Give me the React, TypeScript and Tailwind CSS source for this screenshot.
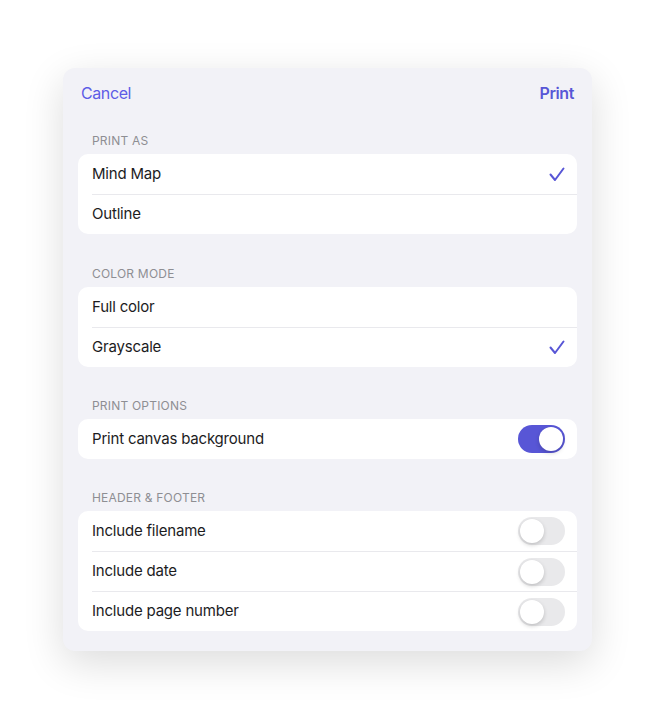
import { useState } from 'react';

type Row = { label: string; checked?: boolean };

function Check() {
  return (
    <svg width="16" height="15" viewBox="0 0 16 15" fill="none">
      <path
        d="M1.5 7.5 L6 13 L14.5 1.5"
        stroke="#5856d6"
        strokeWidth="2"
        strokeLinecap="round"
        strokeLinejoin="round"
      />
    </svg>
  );
}

function Toggle({ on }: { on: boolean }) {
  return (
    <div
      className={
        on
          ? 'flex h-[28px] w-[47px] items-center justify-end rounded-full bg-[#5856d6] p-[2px]'
          : 'flex h-[28px] w-[47px] items-center justify-start rounded-full bg-[#e9e9eb] p-[2px]'
      }
    >
      <div className="h-[24px] w-[24px] rounded-full bg-white shadow-[0_2px_4px_rgba(0,0,0,0.18)]" />
    </div>
  );
}

function Label({ children }: { children: string }) {
  return (
    <div className="mb-[5px] px-[14px] text-[12px] leading-4 tracking-[0.2px] text-[#8e8e93] uppercase">
      {children}
    </div>
  );
}

function Group({ children }: { children: React.ReactNode }) {
  return <div className="overflow-hidden rounded-[10px] bg-white">{children}</div>;
}

function RowLine({
  first,
  children,
  right,
}: {
  first?: boolean;
  children: string;
  right?: React.ReactNode;
}) {
  return (
    <div className="pl-[14px]">
      <div
        className={
          first
            ? 'flex h-[40px] items-center justify-between pr-[12px]'
            : 'flex h-[40px] items-center justify-between border-t border-[#e9e9ed] pr-[12px]'
        }
      >
        <span className="text-[15px] tracking-[-0.2px] text-[#1c1c1e]">{children}</span>
        {right}
      </div>
    </div>
  );
}

export default function App() {
  const [printAs] = useState<Row[]>([
    { label: 'Mind Map', checked: true },
    { label: 'Outline' },
  ]);
  const [colorMode] = useState<Row[]>([
    { label: 'Full color' },
    { label: 'Grayscale', checked: true },
  ]);
  const headerFooter = ['Include filename', 'Include date', 'Include page number'];

  return (
    <div
      className="flex h-[720px] w-full items-start justify-center bg-white pt-[68px]"
      style={{ fontFamily: 'Inter, "Noto Sans", sans-serif' }}
    >
      <div className="w-[529px] rounded-[12px] bg-[#f2f2f7] px-[15px] pb-[20px] shadow-[0_12px_40px_rgba(0,0,0,0.14)]">
        <div className="flex items-center justify-between px-[3px] pt-[14px] text-[16px] leading-[22px] tracking-[-0.4px]">
          <button type="button" className="text-[#5e5ce6]">
            Cancel
          </button>
          <button type="button" className="font-semibold text-[#5856d6]">
            Print
          </button>
        </div>

        <div className="mt-[29px]">
          <Label>Print as</Label>
          <Group>
            {printAs.map((r, i) => (
              <RowLine key={r.label} first={i === 0} right={r.checked ? <Check /> : null}>
                {r.label}
              </RowLine>
            ))}
          </Group>
        </div>

        <div className="mt-[32px]">
          <Label>Color mode</Label>
          <Group>
            {colorMode.map((r, i) => (
              <RowLine key={r.label} first={i === 0} right={r.checked ? <Check /> : null}>
                {r.label}
              </RowLine>
            ))}
          </Group>
        </div>

        <div className="mt-[31px]">
          <Label>Print options</Label>
          <Group>
            <RowLine first right={<Toggle on />}>
              Print canvas background
            </RowLine>
          </Group>
        </div>

        <div className="mt-[31px]">
          <Label>Header &amp; footer</Label>
          <Group>
            {headerFooter.map((t, i) => (
              <RowLine key={t} first={i === 0} right={<Toggle on={false} />}>
                {t}
              </RowLine>
            ))}
          </Group>
        </div>
      </div>
    </div>
  );
}
